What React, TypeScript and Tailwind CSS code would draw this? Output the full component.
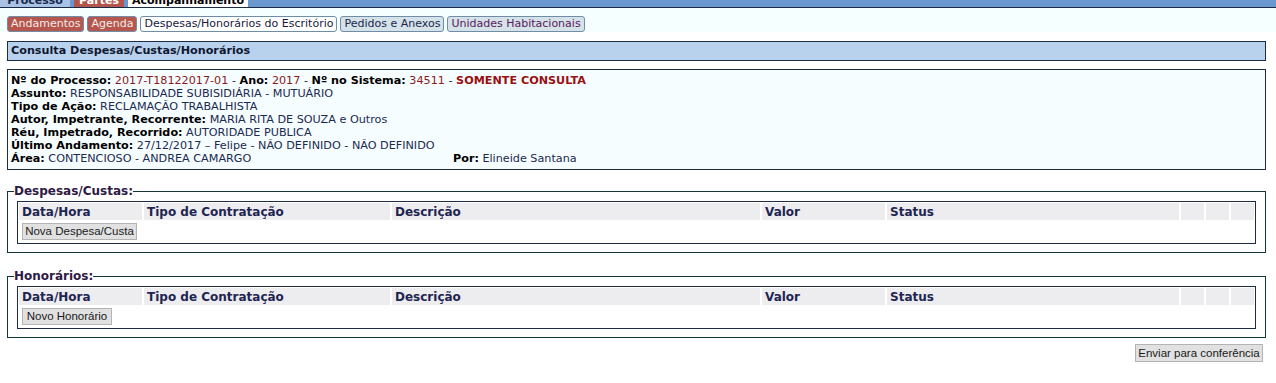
export default function App() {
    const topTabs = [
        { label: "Processo", cls: "bg-[#a9c3e6] text-[#1a2a4a]", w: "w-[70px]" },
        { label: "Partes", cls: "bg-[#b4554c] text-white", w: "w-[50px]" },
        { label: "Acompanhamento", cls: "bg-white text-black", w: "w-[120px]" },
    ];

    const subTabs = [
        { label: "Andamentos", cls: "bg-[#b5574f] text-[#f3ece8] border-[#6f8ea6]" },
        { label: "Agenda", cls: "bg-[#b5574f] text-[#f3ece8] border-[#6f8ea6]" },
        { label: "Despesas/Honorários do Escritório", cls: "bg-white text-[#1a1a40] border-[#6f8ea6]" },
        { label: "Pedidos e Anexos", cls: "bg-[#d5e2ea] text-[#1a2a4a] border-[#6f8ea6]" },
        { label: "Unidades Habitacionais", cls: "bg-[#d5e2ea] text-[#5a1a5a] border-[#6f8ea6]" },
    ];

    return (
        <div className="min-h-screen w-full bg-white font-['DejaVu_Sans',Verdana,sans-serif] text-[11.2px] text-[#1a1a1a]">
            {/* Top tab strip, cut off at the top */}
            <div className="h-[7px] bg-[#6a97d0] border-b border-[#1d2c44] overflow-hidden box-content">
                <div className="flex gap-[4px] -mt-[6px]">
                    {topTabs.map((t) => (
                        <div
                            key={t.label}
                            className={`${t.cls} ${t.w} h-[13px] flex items-center justify-center font-bold text-[11px] leading-[13px] whitespace-nowrap overflow-hidden`}
                        >
                            {t.label}
                        </div>
                    ))}
                </div>
            </div>

            {/* Sub tabs */}
            <div className="bg-[#f6ffff] h-[24px] pl-[7px] flex items-end gap-[3px]">
                {subTabs.map((t) => (
                    <div
                        key={t.label}
                        className={`${t.cls} h-[16px] border rounded-[3px] px-[3px] text-[11px] leading-[14px] flex items-center whitespace-nowrap`}
                    >
                        {t.label}
                    </div>
                ))}
            </div>

            <div className="pl-[7px] pr-[10px]">
                {/* Header */}
                <div className="mt-[9px] h-[20px] bg-[#b8d2ee] border border-[#1d2c44] px-[3px] flex items-center font-bold text-[#101830]">
                    Consulta Despesas/Custas/Honorários
                </div>

                {/* Process info */}
                <div className="mt-[8px] h-[101px] bg-[#f6fdff] border border-[#1d2c44] px-[3px] pt-[4px] leading-[13px] text-[#1a2a50]">
                    <div>
                        <b className="text-black">Nº do Processo:</b> <span className="text-[#8b1a1a]">2017-T18122017-01</span> -{" "}
                        <b className="text-black">Ano:</b> <span className="text-[#8b1a1a]">2017</span> -{" "}
                        <b className="text-black">Nº no Sistema:</b> <span className="text-[#8b1a1a]">34511</span> -{" "}
                        <b className="text-[#9a0f0f]">SOMENTE CONSULTA</b>
                    </div>
                    <div><b className="text-black">Assunto:</b> RESPONSABILIDADE SUBISIDIÁRIA - MUTUÁRIO</div>
                    <div><b className="text-black">Tipo de Ação:</b> RECLAMAÇÃO TRABALHISTA</div>
                    <div><b className="text-black">Autor, Impetrante, Recorrente:</b> MARIA RITA DE SOUZA e Outros</div>
                    <div><b className="text-black">Réu, Impetrado, Recorrido:</b> AUTORIDADE PUBLICA</div>
                    <div><b className="text-black">Último Andamento:</b> 27/12/2017 – Felipe - NÃO DEFINIDO - NÃO DEFINIDO</div>
                    <div className="flex">
                        <div className="w-[442px]"><b className="text-black">Área:</b> CONTENCIOSO - ANDREA CAMARGO</div>
                        <div><b className="text-black">Por:</b> Elineide Santana</div>
                    </div>
                </div>

                <Section title="Despesas/Custas:" button="Nova Despesa/Custa" buttonW="w-[115px]" className="mt-[15px]" />
                <Section title="Honorários:" button="Novo Honorário" buttonW="w-[90px]" className="mt-[17px]" />

                <div className="flex justify-end mt-[6px] pr-[3px]">
                    <button className="h-[18px] w-[128px] bg-[#e1e1e1] border border-[#b4b4b4] font-['Liberation_Sans',Arial,sans-serif] text-[11.5px] leading-[16px] text-[#1a1a1a] whitespace-nowrap">
                        Enviar para conferência
                    </button>
                </div>
            </div>
        </div>
    );
}

function Section({ title, button, buttonW, className }: { title: string; button: string; buttonW: string; className: string }) {
    const cols = [
        { label: "Data/Hora", w: "w-[123px]" },
        { label: "Tipo de Contratação", w: "w-[246px]" },
        { label: "Descrição", w: "w-[368px]" },
        { label: "Valor", w: "w-[123px]" },
        { label: "Status", w: "flex-1" },
        { label: "", w: "w-[23px]" },
        { label: "", w: "w-[23px]" },
        { label: "", w: "w-[23px]" },
    ];

    return (
        <fieldset className={`${className} border border-[#133636] px-[9px] pb-[8px] pt-[3px] min-w-0`}>
            <legend className="ml-[-3px] px-0 font-bold text-[#2e1a44] leading-[13px] text-[12px]">{title}</legend>
            <div className="border border-[#1d2c44] p-[1px]">
                <div className="flex gap-[2px] h-[17px]">
                    {cols.map((c, i) => (
                        <div
                            key={i}
                            className={`${c.w} bg-[#ededf0] pl-[3px] font-bold text-[12px] leading-[19px] text-[#1e2550]`}
                        >
                            {c.label}
                        </div>
                    ))}
                </div>
                <div className="h-[22px] pl-[3px] pt-[3px]">
                    <button
                        className={`${buttonW} h-[17px] bg-[#e1e1e1] border border-[#b4b4b4] font-['Liberation_Sans',Arial,sans-serif] text-[11.5px] leading-[15px] text-[#1a1a1a] whitespace-nowrap`}
                    >
                        {button}
                    </button>
                </div>
            </div>
        </fieldset>
    );
}
